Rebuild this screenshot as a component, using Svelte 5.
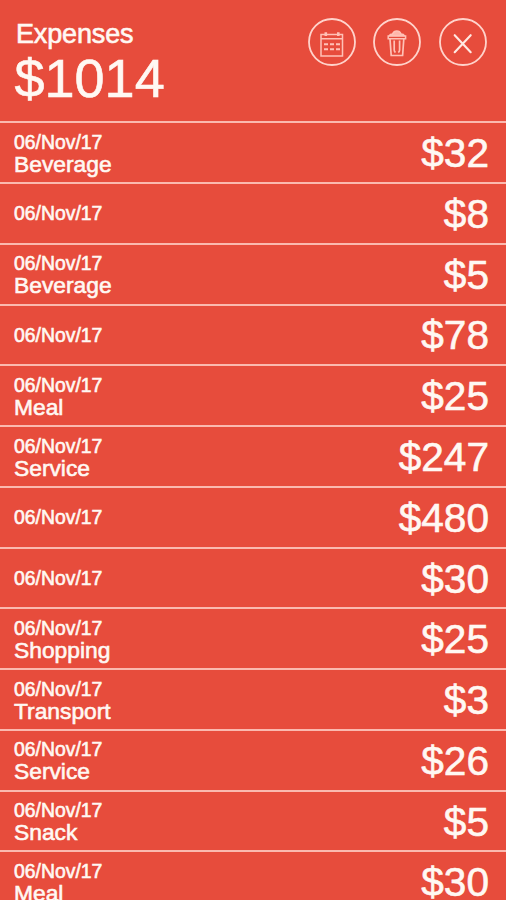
<script>
  const expenses = [
    { label: 'Beverage', amount: 32 },
    { label: '', amount: 8 },
    { label: 'Beverage', amount: 5 },
    { label: '', amount: 78 },
    { label: 'Meal', amount: 25 },
    { label: 'Service', amount: 247 },
    { label: '', amount: 480 },
    { label: '', amount: 30 },
    { label: 'Shopping', amount: 25 },
    { label: 'Transport', amount: 3 },
    { label: 'Service', amount: 26 },
    { label: 'Snack', amount: 5 },
    { label: 'Meal', amount: 30 }
  ];
</script>

<main class="screen">
  <header>
    <div class="summary">
      <div class="title">Expenses</div>
      <div class="total">$1014</div>
    </div>
    <div class="actions">
      <button aria-label="Calendar">
        <svg width="48" height="48" viewBox="0 0 48 48">
          <circle cx="24" cy="24" r="23" />
          <g class="fine">
            <path d="M13 16.5h21.5v21.5h-21.5zM13 20.7h21.5" />
            <path d="M17.8 14.3v3.6M30.3 14.3v3.6" stroke-width="2.6" />
            <path d="M16 26.2h4M22 26.2h4M28 26.2h4M16 31.2h4M22 31.2h4M28 31.2h4" stroke-width="2" />
          </g>
        </svg>
      </button>
      <button aria-label="Delete">
        <svg width="48" height="48" viewBox="0 0 48 48">
          <circle cx="24" cy="24" r="23" />
          <g class="fine">
            <path class="lid" d="M16.5 17.5c.3-1 1.2-1.5 3-1.5.8-1.9 2.2-3 4.3-3s3.5 1.1 4.3 3c1.8 0 2.8.5 3.1 1.5z" />
            <path d="M15.2 18h17.4v2.8h-17.4z" />
            <path d="M17 21l1.2 16.5h11.4l1.2-16.5" stroke-width="1.7" />
            <path d="M21.2 22.5v9.5q0 1.5 1.3 2.5M26.6 22.5v9.5q0 1.5-1.3 2.5" stroke-width="1.7" />
          </g>
        </svg>
      </button>
      <button aria-label="Close">
        <svg width="48" height="48" viewBox="0 0 48 48">
          <circle cx="24" cy="24" r="23" />
          <path class="cross" d="M15.7 17.2l16 17M31.7 17.2l-16 17" />
        </svg>
      </button>
    </div>
  </header>
  <ul>
    {#each expenses as expense}
      <li>
        <div class="details">
          <span class="date">06/Nov/17</span>
          {#if expense.label}<span class="label">{expense.label}</span>{/if}
        </div>
        <span class="amount">${expense.amount}</span>
      </li>
    {/each}
  </ul>
</main>

<style>
  :global(body) {
    background: #e74c3c;
  }
  .screen {
    box-sizing: border-box;
    width: 100%;
    height: 900px;
    overflow: hidden;
    background: #e74c3c;
    color: #fff8f3;
    font-family: "Liberation Sans", Arial, sans-serif;
    -webkit-text-stroke: 0.6px #fff8f3;
  }
  header {
    box-sizing: border-box;
    height: 121.3px;
    display: flex;
    justify-content: space-between;
    padding: 18px 19px 0 16px;
  }
  .title {
    font-size: 27px;
    line-height: 32px;
    letter-spacing: -0.15px;
  }
  .total {
    font-size: 54px;
    line-height: 57px;
    margin-left: -1.5px;
  }
  .actions {
    display: flex;
    gap: 17.6px;
  }
  button {
    display: block;
    width: 48px;
    height: 48px;
    padding: 0;
    border: 0;
    background: none;
  }
  svg {
    display: block;
    fill: none;
    stroke: #ffd3cb;
    stroke-width: 1.8;
  }
  .fine {
    stroke: #ffc1b6;
    stroke-width: 1.5;
  }
  .lid {
    fill: #ffb5a9;
  }
  .cross {
    stroke: #ffe9e2;
    stroke-width: 2.1;
    stroke-linecap: round;
  }
  ul {
    list-style: none;
    margin: 0;
    padding: 0;
  }
  li {
    box-sizing: border-box;
    height: 60.77px;
    border-top: 2px solid #fbb9af;
    display: flex;
    align-items: center;
    justify-content: space-between;
    padding: 1px 17px 0 14px;
  }
  .details {
    display: flex;
    flex-direction: column;
  }
  .date {
    font-size: 19.4px;
    line-height: 21px;
  }
  .label {
    font-size: 22.8px;
    line-height: 23px;
  }
  .date:not(:last-child) {
    padding-top: 1px;
  }
  .amount {
    font-size: 40.6px;
    line-height: 46px;
  }
</style>
